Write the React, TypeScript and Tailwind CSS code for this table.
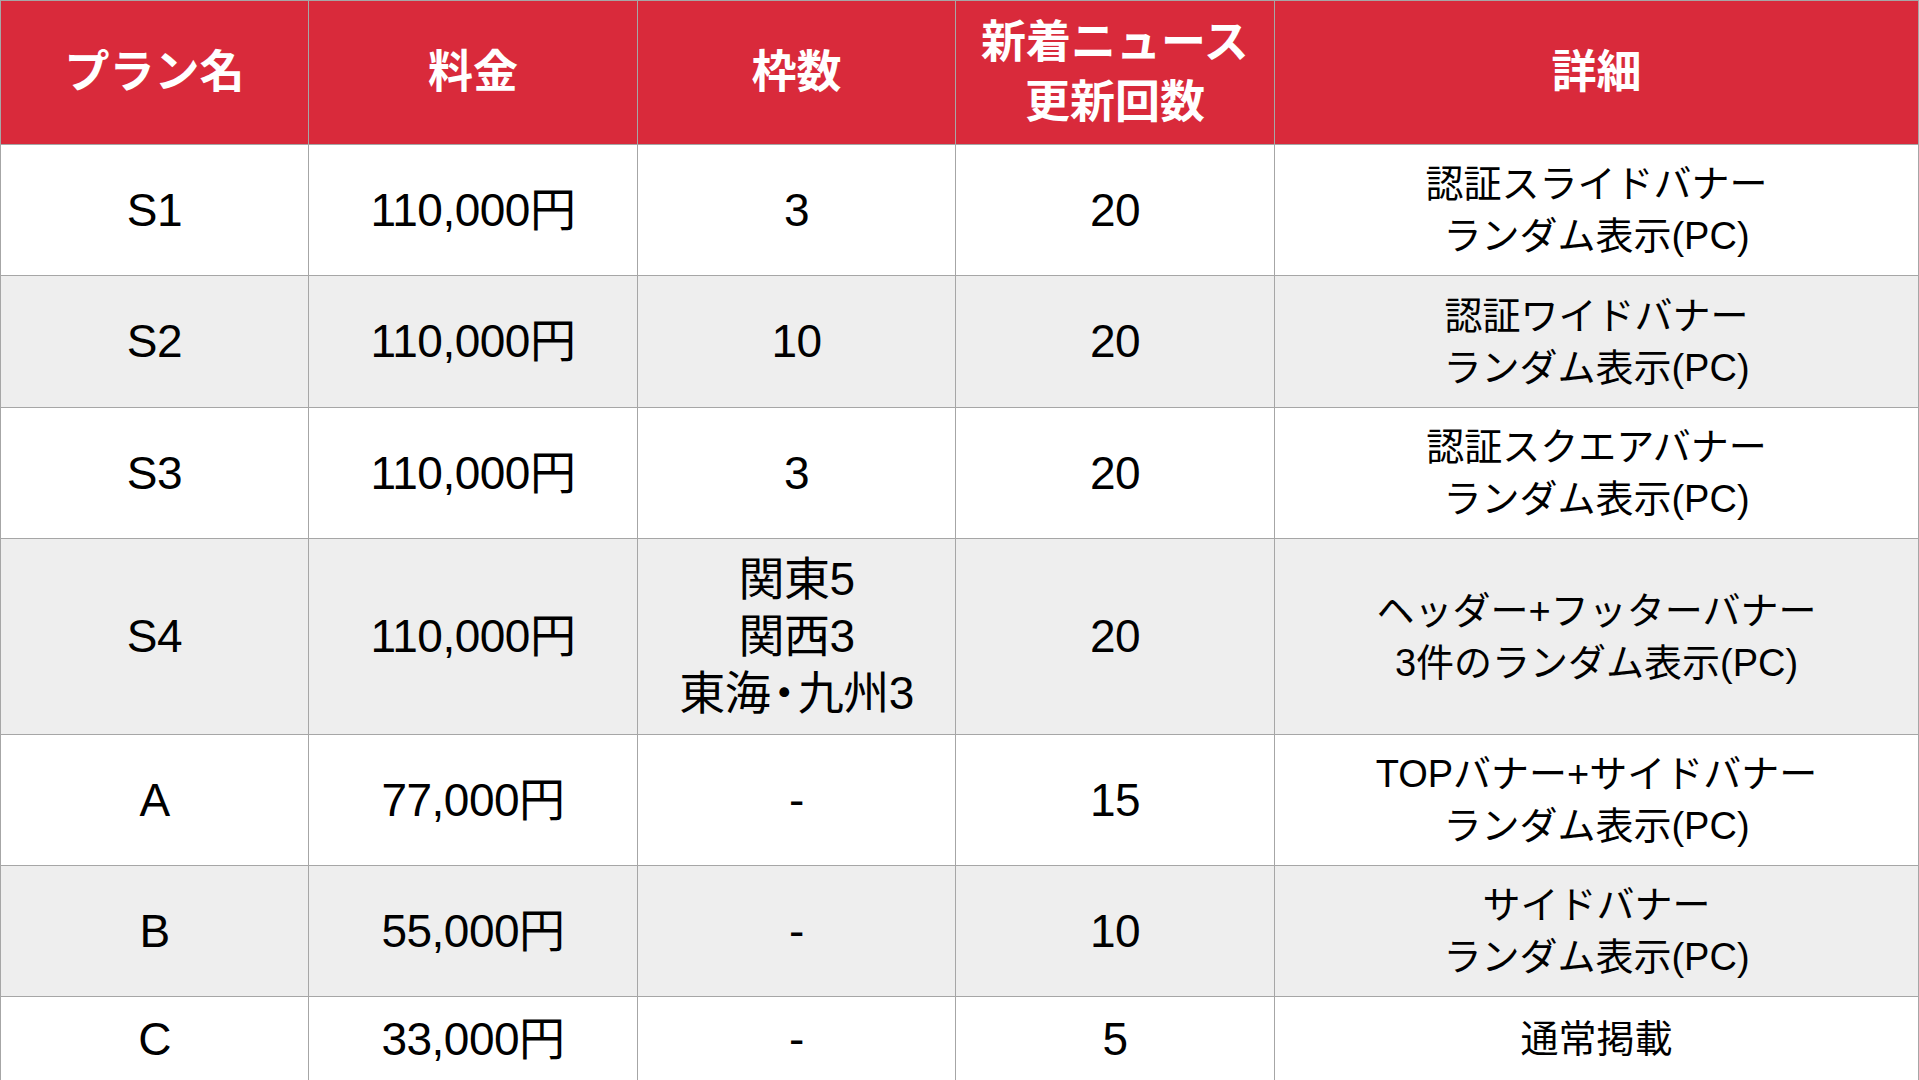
type Row = {
  plan: string
  price: string
  slots: string[]
  news: string
  detail: string[]
  h: string
  gray?: boolean
}

const rows: Row[] = [
  { plan: "S1", price: "110,000円", slots: ["3"], news: "20", detail: ["認証スライドバナー", "ランダム表示(PC)"], h: "h-[131px]" },
  { plan: "S2", price: "110,000円", slots: ["10"], news: "20", detail: ["認証ワイドバナー", "ランダム表示(PC)"], h: "h-[132px]", gray: true },
  { plan: "S3", price: "110,000円", slots: ["3"], news: "20", detail: ["認証スクエアバナー", "ランダム表示(PC)"], h: "h-[131px]" },
  { plan: "S4", price: "110,000円", slots: ["関東5", "関西3", "東海・九州3"], news: "20", detail: ["ヘッダー+フッターバナー", "3件のランダム表示(PC)"], h: "h-[196px]", gray: true },
  { plan: "A", price: "77,000円", slots: ["-"], news: "15", detail: ["TOPバナー+サイドバナー", "ランダム表示(PC)"], h: "h-[131px]" },
  { plan: "B", price: "55,000円", slots: ["-"], news: "10", detail: ["サイドバナー", "ランダム表示(PC)"], h: "h-[131px]", gray: true },
  { plan: "C", price: "33,000円", slots: ["-"], news: "5", detail: ["通常掲載"], h: "h-[85px]" },
]

const cols = "grid grid-cols-[308px_329px_318px_319px_1fr]"
const cell = "flex flex-col items-center justify-center text-center border-r border-b border-[#a6a6a6]"

function Slot({ text }: { text: string }) {
  const parts = text.split("・")
  if (parts.length === 1) return <span>{text}</span>
  return (
    <span className="whitespace-nowrap">
      {parts[0]}
      <span className="mx-[-9px]">・</span>
      {parts[1]}
    </span>
  )
}

export default function App() {
  return (
    <div
      className="h-[1080px] w-full overflow-hidden bg-white text-black"
      style={{ fontFamily: '"Liberation Sans", "Noto Sans CJK JP", sans-serif' }}
    >
      <div className="border-t border-l border-[#a6a6a6]">
        <div className={`${cols} h-[144px] bg-[#d92a3b] text-white font-bold text-[45px] leading-[60px]`}>
          <div className={cell}>プラン名</div>
          <div className={cell}>料金</div>
          <div className={cell}>枠数</div>
          <div className={cell}>
            <span>新着ニュース</span>
            <span>更新回数</span>
          </div>
          <div className={cell}>詳細</div>
        </div>

        {rows.map((r) => (
          <div key={r.plan} className={`${cols} ${r.h} ${r.gray ? "bg-[#eeeeee]" : "bg-white"}`}>
            <div className={`${cell} text-[46px] tracking-[-0.5px]`}>{r.plan}</div>
            <div className={`${cell} text-[46px] tracking-[-0.5px]`}>{r.price}</div>
            <div className={`${cell} text-[46px] leading-[57px] tracking-[-0.5px]`}>
              {r.slots.map((s) => (
                <Slot key={s} text={s} />
              ))}
            </div>
            <div className={`${cell} text-[46px] tracking-[-0.5px]`}>{r.news}</div>
            <div className={`${cell} text-[38px] leading-[52px]`}>
              {r.detail.map((d) => (
                <span key={d} className="whitespace-nowrap">{d}</span>
              ))}
            </div>
          </div>
        ))}
      </div>
    </div>
  )
}
